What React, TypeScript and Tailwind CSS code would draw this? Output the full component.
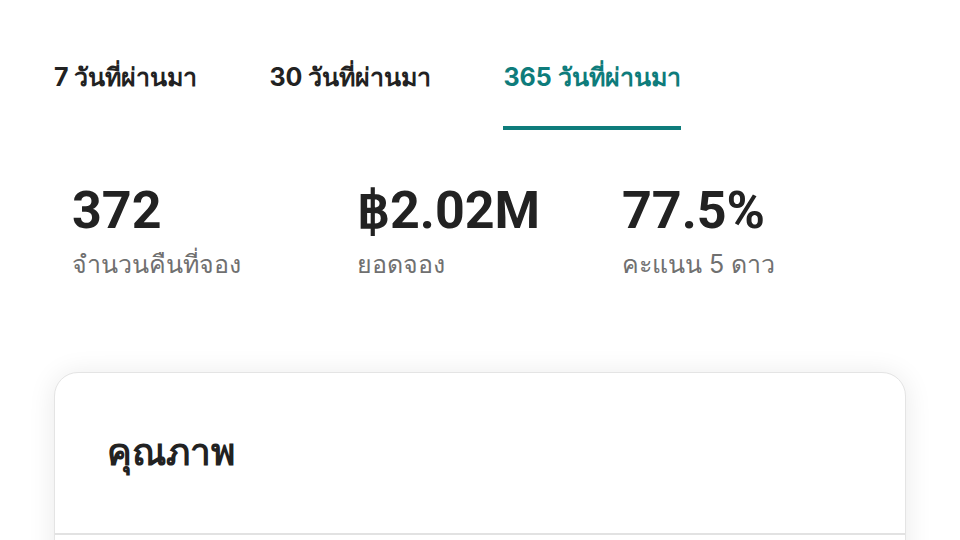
const tabs = ["7 วันที่ผ่านมา", "30 วันที่ผ่านมา", "365 วันที่ผ่านมา"];

const stats = [
  { value: "372", label: "จำนวนคืนที่จอง", width: "w-[285px]" },
  { value: "฿2.02M", label: "ยอดจอง", width: "w-[265px]" },
  { value: "77.5%", label: "คะแนน 5 ดาว", width: "w-[265px]" },
];

export default function App() {
  const active = 2;

  return (
    <div className="w-[960px] h-[540px] overflow-hidden bg-white text-[#222222] font-['Inter','Noto_Sans',sans-serif]">
      <nav className="flex gap-[72px] pl-[54px] pt-[58px]">
        {tabs.map((tab, i) => (
          <button
            key={tab}
            className={
              i === active
                ? "flex flex-col text-[25px] font-bold leading-[38px] text-[#0e7c7b]"
                : "flex flex-col text-[25px] font-bold leading-[38px] text-[#222222]"
            }
          >
            <span>{tab}</span>
            <span
              className={
                i === active
                  ? "mt-[30px] h-[4px] w-full bg-[#0e7c7b]"
                  : "mt-[30px] h-[4px] w-full bg-transparent"
              }
            />
          </button>
        ))}
      </nav>

      <div className="flex pl-[72px] pt-[52px]">
        {stats.map((s) => (
          <div key={s.value} className={`${s.width} flex flex-col`}>
            <span className="font-['Roboto',sans-serif] text-[52px] font-bold leading-[58px]">{s.value}</span>
            <span className="mt-[8px] text-[25px] leading-[32px] text-[#707070]">{s.label}</span>
          </div>
        ))}
      </div>

      <section className="mx-[54px] mt-[92px] rounded-t-[24px] border border-[#e4e4e4] bg-white shadow-[0_2px_28px_rgba(0,0,0,0.09)]">
        <h2 className="px-[52px] pt-[52px] pb-[54px] text-[37px] font-bold leading-[54px]">คุณภาพ</h2>
        <div className="h-[2px] bg-[#e2e2e2]" />
        <div className="h-[40px]" />
      </section>
    </div>
  );
}
